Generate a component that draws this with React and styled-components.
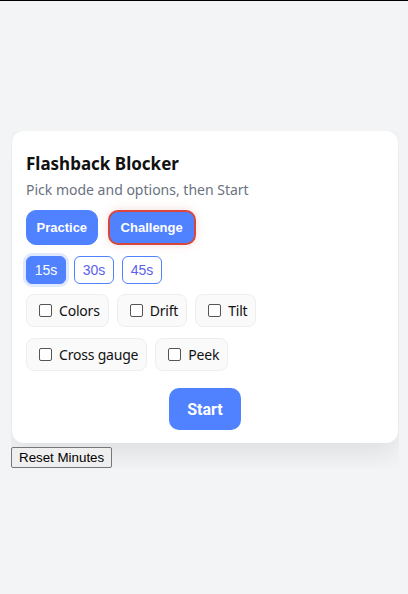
import styled, { createGlobalStyle } from "styled-components";

const GlobalStyle = createGlobalStyle`
  html, body {
    margin: 0;
    padding: 0;
    background: #f3f4f6;
  }
  body {
    border-top: 1px solid #000;
    font-family: "Noto Sans", "Liberation Sans", sans-serif;
  }
`;

const Page = styled.div`
  padding: 130px 0 0 11px;
`;

const Wrapper = styled.div`
  width: 388px;
  overflow: hidden;
`;

const Card = styled.div`
  margin: 0 1px 4px 1px;
  background: #fff;
  border-radius: 12px;
  padding: 21px 14px 13px;
  box-shadow: 0 10px 28px rgba(0, 0, 0, 0.09);
`;

const Title = styled.h1`
  margin: 0 0 4px;
  font-size: 17px;
  line-height: 24px;
  font-weight: 700;
  color: #111;
`;

const Subtitle = styled.p`
  margin: 0 0 10px;
  font-size: 14px;
  line-height: 20px;
  color: #6b7280;
`;

const Row = styled.div`
  display: flex;
  flex-wrap: wrap;
  gap: ${(p) => p.$gap || 8}px;
  margin-bottom: ${(p) => p.$mb || 0}px;
`;

const ModeButton = styled.button`
  height: 35px;
  padding: 0 ${(p) => (p.$selected ? 11 : 9.5)}px;
  border-radius: 10px;
  border: ${(p) => (p.$selected ? "2px solid #d9463b" : "1px solid #5082ff")};
  background: #5082ff;
  color: #fff;
  font-family: "Liberation Sans", Arial, sans-serif;
  font-weight: 700;
  font-size: 13px;
  box-shadow: ${(p) => (p.$selected ? "0 0 10px rgba(217, 70, 59, 0.18)" : "none")};
`;

const TimeButton = styled.button`
  height: 28px;
  min-width: 40px;
  padding: 0 7px;
  border-radius: 6px;
  border: 1px solid #5082ff;
  background: ${(p) => (p.$active ? "#5082ff" : "#fff")};
  color: ${(p) => (p.$active ? "#fff" : "#5d60ec")};
  font-family: "Liberation Sans", Arial, sans-serif;
  font-size: 14px;
  box-shadow: ${(p) => (p.$active ? "0 0 0 3px #e1e9ff" : "none")};
`;

const Chip = styled.label`
  display: inline-flex;
  align-items: center;
  gap: 7px;
  height: 33px;
  box-sizing: border-box;
  padding: 0 8px 0 12px;
  border: 1px solid #eeeeee;
  border-radius: 8px;
  background: #fafafa;
  font-size: 14px;
  letter-spacing: -0.2px;
  color: #111;
`;

const Box = styled.span`
  width: 11px;
  height: 11px;
  border: 1px solid #555;
  border-radius: 2px;
  background: #fff;
`;

const Footer = styled.div`
  display: flex;
  justify-content: center;
  margin-top: 17px;
`;

const StartButton = styled.button`
  height: 42px;
  padding: 0 18px;
  border: none;
  border-radius: 10px;
  background: #5082ff;
  color: #fff;
  font-family: Roboto, "Liberation Sans", sans-serif;
  font-weight: 700;
  font-size: 16px;
`;

const ResetButton = styled.button`
  display: block;
  font-family: "Liberation Sans", Arial, sans-serif;
  font-size: 13.33px;
  padding: 1px 7px;
  height: 21px;
  border: 1px solid #767676;
  border-radius: 2px;
  background: #efefef;
  color: #000;
`;

const options1 = ["Colors", "Drift", "Tilt"];
const options2 = ["Cross gauge", "Peek"];

const App = () => {
  return (
    <Page>
      <GlobalStyle />
      <Wrapper>
        <Card>
          <Title>Flashback Blocker</Title>
          <Subtitle>Pick mode and options, then Start</Subtitle>
          <Row $gap={10} $mb={11}>
            <ModeButton>Practice</ModeButton>
            <ModeButton $selected>Challenge</ModeButton>
          </Row>
          <Row $gap={8} $mb={10}>
            <TimeButton $active>15s</TimeButton>
            <TimeButton>30s</TimeButton>
            <TimeButton>45s</TimeButton>
          </Row>
          <Row $gap={8} $mb={11}>
            {options1.map((o) => (
              <Chip key={o}>
                <Box />
                {o}
              </Chip>
            ))}
          </Row>
          <Row $gap={8}>
            {options2.map((o) => (
              <Chip key={o}>
                <Box />
                {o}
              </Chip>
            ))}
          </Row>
          <Footer>
            <StartButton>Start</StartButton>
          </Footer>
        </Card>
        <ResetButton>Reset Minutes</ResetButton>
      </Wrapper>
    </Page>
  );
};

export default App;
